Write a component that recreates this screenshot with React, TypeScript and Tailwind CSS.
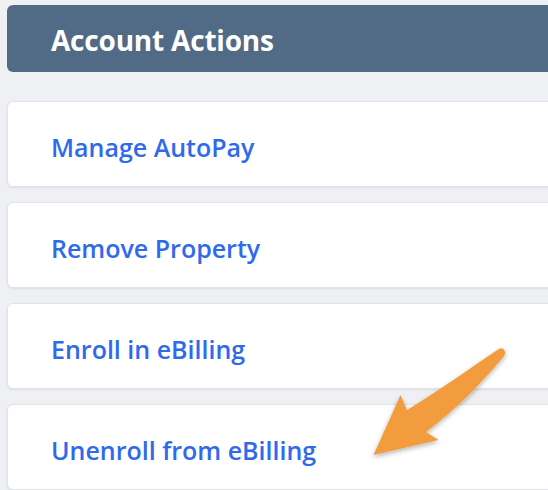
const actions = ["Manage AutoPay", "Remove Property", "Enroll in eBilling", "Unenroll from eBilling"];

export default function App() {
  return (
    <div className="relative w-[548px] h-[490px] overflow-hidden bg-[#eff0f4] font-['Open_Sans',sans-serif]">
      <div className="w-[570px] pl-[7px] pt-[5px] flex flex-col">
        <div className="h-[67px] rounded-[6px] bg-[#516a85] flex items-center pl-[44px]">
          <h2 className="text-[28px] font-bold text-white tracking-[-0.2px] pt-[2px]">Account Actions</h2>
        </div>
        <div className="mt-[29px] flex flex-col gap-[15px]">
          {actions.map((a) => (
            <div
              key={a}
              className="h-[86px] rounded-[6px] bg-white border border-[#e1e3e8] shadow-[0_1px_2px_rgba(0,0,0,0.08)] flex items-center pl-[43px]"
            >
              <a className="text-[25px] font-semibold text-[#2f6aeb] pt-[8px]">{a}</a>
            </div>
          ))}
        </div>
      </div>
      <svg className="absolute left-0 top-0 pointer-events-none" width="548" height="490" viewBox="0 0 548 490">
        <defs>
          <filter id="sh" x="-20%" y="-20%" width="140%" height="140%">
            <feDropShadow dx="0" dy="2" stdDeviation="2.5" floodColor="#000" floodOpacity="0.3" />
          </filter>
        </defs>
        <path
          d="M499 349 C 470 368, 440 390, 407 410 L 400.5 395 L 373.5 455 L 438.5 440 L 426 432 C 455 410, 480 385, 504 356 C 507 352, 503 346, 499 349 Z"
          fill="#f29c3c"
          filter="url(#sh)"
        />
      </svg>
    </div>
  );
}
